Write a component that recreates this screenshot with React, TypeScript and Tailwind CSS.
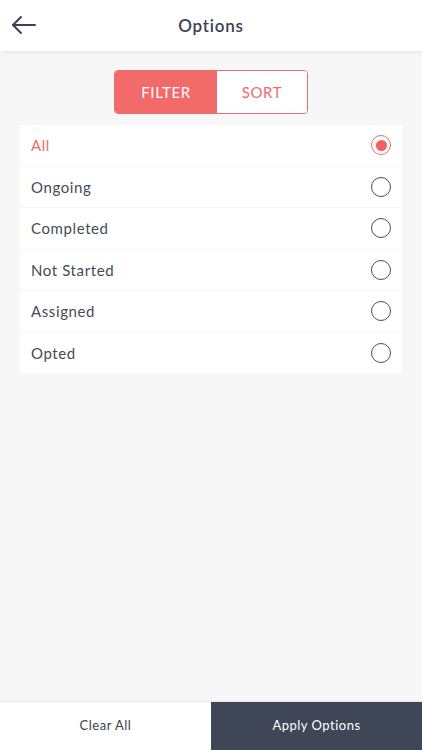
import { useState } from "react";

const options = ["All", "Ongoing", "Completed", "Not Started", "Assigned", "Opted"];

export default function App() {
  const [tab, setTab] = useState("filter");
  const [selected, setSelected] = useState("All");

  return (
    <div className="h-[750px] w-full flex flex-col bg-[#f7f7f7] font-['Lato','Open_Sans',sans-serif]">
      <header className="h-[51px] bg-white flex items-center relative shadow-[0_2px_4px_rgba(0,0,0,0.06)] z-10">
        <button className="absolute left-[11px] top-[14px] text-[#3b4252]">
          <svg width="26" height="22" viewBox="0 0 26 22" fill="none" stroke="currentColor" strokeWidth="2" strokeLinecap="round" strokeLinejoin="round">
            <path d="M24 11H2" />
            <path d="M10 3L2 11l8 8" />
          </svg>
        </button>
        <h1 className="w-full text-center text-[17px] font-semibold text-[#3b4252] tracking-[0.8px]">Options</h1>
      </header>

      <main className="flex-1 pt-[19px]">
        <div className="flex justify-center">
          <div className="flex h-[44px] rounded-[4px] border border-[#f06a6a] overflow-hidden">
            <button
              onClick={() => setTab("filter")}
              className={`w-[102px] text-[15px] tracking-[0.6px] ${tab === "filter" ? "bg-[#f26a6a] text-white" : "bg-white text-[#f06a6a]"}`}
            >
              FILTER
            </button>
            <button
              onClick={() => setTab("sort")}
              className={`w-[90px] text-[15px] tracking-[0.6px] ${tab === "sort" ? "bg-[#f26a6a] text-white" : "bg-white text-[#f06a6a]"}`}
            >
              SORT
            </button>
          </div>
        </div>

        <ul className="mt-[11px] mx-[20px] flex flex-col gap-px">
          {options.map((o) => {
            const active = o === selected;
            return (
              <li
                key={o}
                onClick={() => setSelected(o)}
                className="h-[40.5px] bg-white flex items-center justify-between pl-[11px] pr-[11px]"
              >
                <span className={`text-[15px] tracking-[0.6px] ${active ? "text-[#f06a6a]" : "text-[#464b57]"}`}>{o}</span>
                <span
                  className={`w-[20px] h-[20px] rounded-full border-[1.3px] flex items-center justify-center ${active ? "border-[#f06a6a]" : "border-[#4a4f5a]"}`}
                >
                  {active && <span className="w-[11px] h-[11px] rounded-full bg-[#f26161]" />}
                </span>
              </li>
            );
          })}
        </ul>
      </main>

      <footer className="h-[49px] flex border-t border-[#e6e6e6]">
        <button className="w-1/2 bg-white text-[13px] tracking-[0.5px] text-[#3b4252]">Clear All</button>
        <button className="w-1/2 bg-[#3e4657] text-[13px] tracking-[0.5px] text-white">Apply Options</button>
      </footer>
    </div>
  );
}
